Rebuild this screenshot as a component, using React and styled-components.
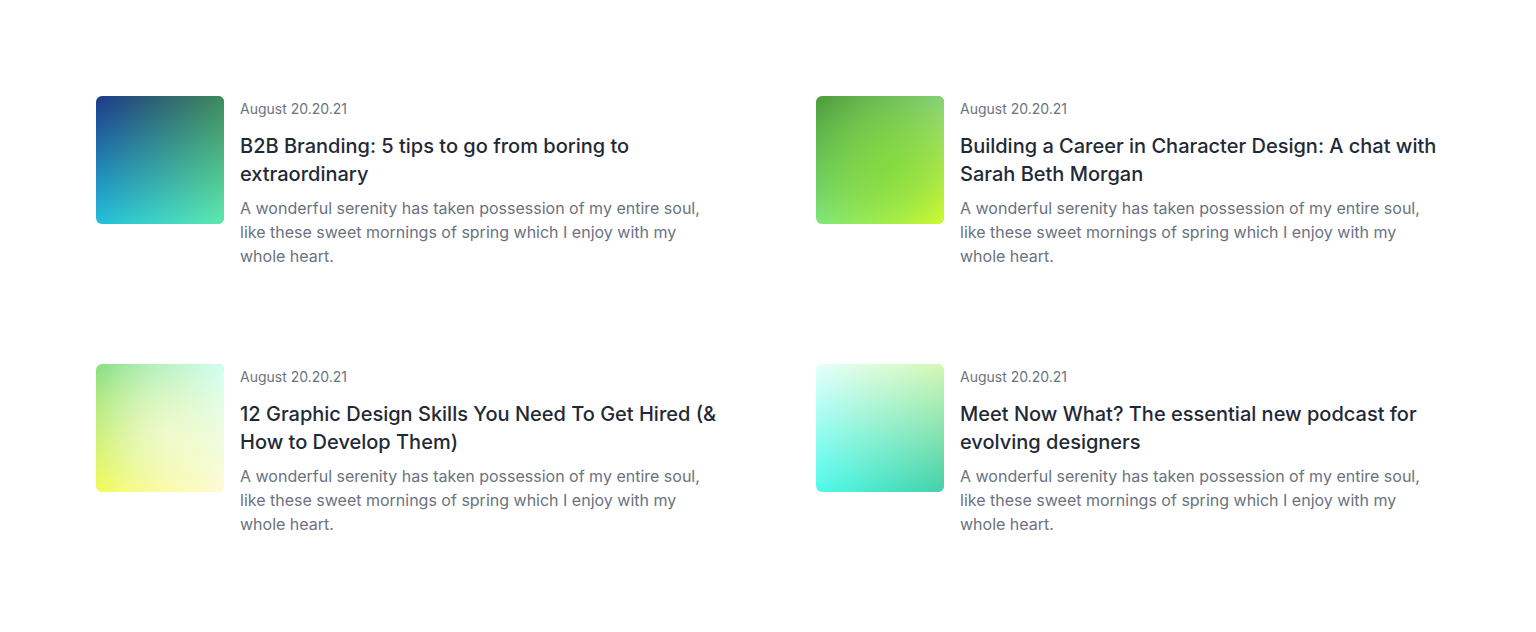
import React from "react";
import styled, { createGlobalStyle } from "styled-components";

// each thumbnail is a four-corner blend: left edge below, right edge masked on top
const posts = [
  {
    date: "August 20.20.21",
    title: "B2B Branding: 5 tips to go from boring to extraordinary",
    left: ["#1e3a8a", "#22c0dc"],
    right: ["#3f8a5a", "#5eeab0"],
  },
  {
    date: "August 20.20.21",
    title: "Building a Career in Character Design: A chat with Sarah Beth Morgan",
    left: ["#4c9c3a", "#7ee680"],
    right: ["#88d27c", "#d8fc2e"],
    glow: "rgba(122, 218, 50, 0.6)",
  },
  {
    date: "August 20.20.21",
    title: "12 Graphic Design Skills You Need To Get Hired (& How to Develop Them)",
    left: ["#8cdf88", "#f2fb54"],
    right: ["#d0fff2", "#fff9d6"],
    glow: "rgba(255, 253, 225, 0.6)",
  },
  {
    date: "August 20.20.21",
    title: "Meet Now What? The essential new podcast for evolving designers",
    left: ["#e6fffc", "#50fbea"],
    right: ["#d4f8b4", "#44cfa8"],
  },
];

const excerpt =
  "A wonderful serenity has taken possession of my entire soul, like these sweet mornings of spring which I enjoy with my whole heart.";

function App() {
  return (
    <>
      <GlobalStyle />
      <Section>
        <Grid>
          {posts.map((post, i) => (
            <Post key={i}>
              <Thumb $left={post.left} $right={post.right} $glow={post.glow} />
              <Body>
                <PostDate>{post.date}</PostDate>
                <Title>{post.title}</Title>
                <Excerpt>{excerpt}</Excerpt>
              </Body>
            </Post>
          ))}
        </Grid>
      </Section>
    </>
  );
}

const GlobalStyle = createGlobalStyle`
  body {
    margin: 0;
    background: #ffffff;
    font-family: Inter, "Noto Sans", sans-serif;
  }
`;

const Section = styled.section`
  padding: 96px 96px;
`;

const Grid = styled.div`
  display: grid;
  grid-template-columns: 1fr 1fr;
  column-gap: 96px;
  row-gap: 96px;
`;

const Post = styled.article`
  display: flex;
  align-items: flex-start;
  gap: 16px;
`;

const Thumb = styled.div`
  position: relative;
  flex: 0 0 128px;
  height: 128px;
  border-radius: 6px;
  overflow: hidden;
  background: linear-gradient(to bottom, ${(p) => p.$left[0]}, ${(p) => p.$left[1]});

  &::before {
    content: "";
    position: absolute;
    inset: 0;
    background: linear-gradient(to bottom, ${(p) => p.$right[0]}, ${(p) => p.$right[1]});
    -webkit-mask-image: linear-gradient(to right, transparent, #000);
    mask-image: linear-gradient(to right, transparent, #000);
  }

  &::after {
    content: "";
    position: absolute;
    inset: 0;
    background: ${(p) =>
      p.$glow
        ? `radial-gradient(ellipse 70% 70% at 55% 55%, ${p.$glow} 0%, transparent 100%)`
        : "none"};
  }
`;

const Body = styled.div`
  display: flex;
  flex-direction: column;
  max-width: 480px;
  padding-top: 1px;
`;

const PostDate = styled.span`
  font-size: 14px;
  line-height: 24px;
  color: #6b7280;
`;

const Title = styled.h3`
  margin: 11px 0 0;
  font-size: 20px;
  line-height: 28px;
  font-weight: 500;
  color: #1f2937;
`;

const Excerpt = styled.p`
  margin: 8px 0 0;
  font-size: 16px;
  line-height: 24px;
  color: #6b7280;
`;

export default App;
